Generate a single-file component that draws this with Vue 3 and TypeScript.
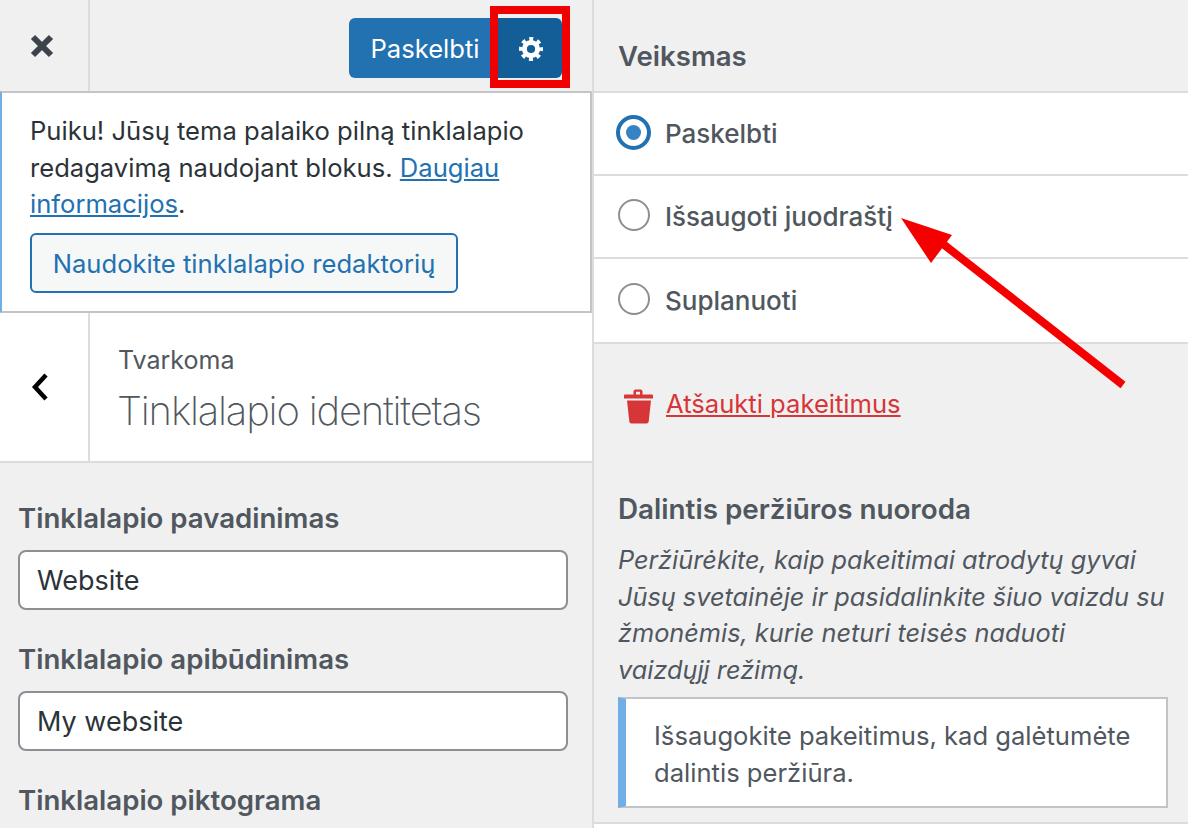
<template>
  <div class="page">
    <section class="left">
      <header class="topbar">
        <div class="close">
          <svg width="26" height="26" viewBox="0 0 26 26"><path d="M4 4 22 22M22 4 4 22" stroke="#3c434a" stroke-width="6" /></svg>
        </div>
        <div class="actions">
          <button class="publish">Paskelbti</button>
          <button class="gear">
            <svg width="26" height="26" viewBox="0 0 26 26">
              <circle cx="13" cy="13" r="10" fill="none" stroke="#fff" stroke-width="4" stroke-dasharray="3.9 3.95" stroke-dashoffset="2" />
              <circle cx="13" cy="13" r="6.6" fill="none" stroke="#fff" stroke-width="5" />
            </svg>
          </button>
        </div>
      </header>

      <div class="theme-notice">
        <p>Puiku! Jūsų tema palaiko pilną tinklalapio redagavimą naudojant blokus. <a>Daugiau informacijos</a>.</p>
        <button class="outline">Naudokite tinklalapio redaktorių</button>
      </div>

      <div class="section-head">
        <div class="back">
          <svg width="20" height="30" viewBox="0 0 20 30"><path d="M16 3 5 15l11 12" fill="none" stroke="#000" stroke-width="4.5" /></svg>
        </div>
        <div class="section-title">
          <span class="crumb">Tvarkoma</span>
          <h2>Tinklalapio identitetas</h2>
        </div>
      </div>

      <div class="fields">
        <div v-for="f in fields" :key="f.label" class="field">
          <label>{{ f.label }}</label>
          <div v-if="f.value" class="input">{{ f.value }}</div>
        </div>
      </div>
    </section>

    <aside class="right">
      <h3 class="action-title">Veiksmas</h3>
      <div class="radios">
        <div v-for="(r, i) in radios" :key="r" class="radio-row">
          <span class="radio" :class="{ on: i === 0 }"></span>
          <span>{{ r }}</span>
        </div>
      </div>

      <div class="discard">
        <svg class="trash" width="32" height="38" viewBox="0 0 32 38">
          <path d="M2 8.500Q2 7.500 3 7.500h8.500V4.500Q11.500 2.500 13.500 2.500h5q2 0 2 2v3H30q1 0 1 1v3H2zM14 4.700v2.800h4V4.700z" fill="#d63638" fill-rule="evenodd" />
          <path d="M5 13.500h24l-2.300 21q-.2 2-2.200 2H9.500q-2 0-2.200-2z" fill="#d63638" />
        </svg>
        <a>Atšaukti pakeitimus</a>
      </div>

      <div class="share">
        <h4>Dalintis peržiūros nuoroda</h4>
        <p class="desc">Peržiūrėkite, kaip pakeitimai atrodytų gyvai Jūsų svetainėje ir pasidalinkite šiuo vaizdu su žmonėmis, kurie neturi teisės naduoti<br />vaizdųjį režimą.</p>
        <div class="save-notice">Išsaugokite pakeitimus, kad galėtumėte dalintis peržiūra.</div>
      </div>
      <div class="bottom-line"></div>
    </aside>

    <!-- annotations on top of the screenshot -->
    <div class="red-box"></div>
    <svg class="arrow" width="1188" height="828" viewBox="0 0 1188 828">
      <path d="M1123 385 938 240" stroke="#f40000" stroke-width="8" />
      <path d="M901 218 952 235 931 263z" fill="#f40000" />
    </svg>
  </div>
</template>

<script setup lang="ts">
const fields = [
  { label: 'Tinklalapio pavadinimas', value: 'Website' },
  { label: 'Tinklalapio apibūdinimas', value: 'My website' },
  { label: 'Tinklalapio piktograma', value: '' },
];

const radios = ['Paskelbti', 'Išsaugoti juodraštį', 'Suplanuoti'];
</script>

<style>
html,
body {
  margin: 0;
  background: #f0f0f1;
}
</style>

<style scoped>
* {
  box-sizing: border-box;
}

.page {
  position: relative;
  display: flex;
  width: 1188px;
  height: 828px;
  overflow: hidden;
  background: #f0f0f1;
  font-family: Inter, "Liberation Sans", sans-serif;
  font-size: 25.6px;
  color: #50575e;
}

.left {
  width: 594px;
  flex-shrink: 0;
  border-right: 2px solid #dcdcde;
}

.topbar {
  display: flex;
  height: 91px;
}

.close {
  display: flex;
  width: 90px;
  align-items: center;
  justify-content: center;
  padding-right: 4px;
  border-right: 2px solid #dcdcde;
}

.actions {
  display: flex;
  flex: 1;
  justify-content: flex-end;
  padding: 18px 30px 0 0;
}

.publish,
.gear {
  height: 60px;
  border: 0;
  color: #fff;
  font: inherit;
}

.publish {
  width: 148px;
  padding: 0 0 0 4px;
  background: #2271b1;
  border-radius: 6px 0 0 6px;
}

.gear {
  display: flex;
  width: 65px;
  padding: 1px 0 0 2px;
  align-items: center;
  justify-content: center;
  background: #135e96;
  border-radius: 0 6px 6px 0;
}

.theme-notice {
  height: 222px;
  padding: 20px 28px 0 28px;
  background: #fff;
  border: 2px solid #c3c4c7;
  border-left-color: #72aee6;
  color: #2c3338;
}

.theme-notice p {
  margin: 0;
  line-height: 36.500px;
}

.theme-notice a {
  color: #2271b1;
  text-decoration: underline;
}

.outline {
  display: block;
  width: 428px;
  height: 60px;
  margin-top: 10px;
  padding: 1px 0 0;
  background: #f6f7f7;
  border: 2px solid #2271b1;
  border-radius: 6px;
  color: #2271b1;
  font: inherit;
}

.section-head {
  display: flex;
  height: 150px;
  background: #fff;
  border-bottom: 2px solid #dcdcde;
}

.back {
  display: flex;
  width: 90px;
  align-items: center;
  justify-content: center;
  padding-right: 8px;
  border-right: 2px solid #dcdcde;
}

.section-title {
  display: flex;
  flex-direction: column;
  padding: 31px 0 0 28px;
}

.crumb {
  font-size: 25px;
  line-height: 32px;
}

.section-title h2 {
  margin: 12px 0 0 -1px;
  font-size: 40px;
  font-weight: 200;
  letter-spacing: -1.2px;
  line-height: 46px;
}

.fields {
  padding: 36px 24px 0 18px;
}

.field {
  margin-bottom: 30px;
}

.field label {
  display: block;
  height: 38px;
  margin-bottom: 13px;
  font-size: 27.600px;
  font-weight: 600;
  line-height: 38px;
}

.input {
  height: 60px;
  padding-left: 17px;
  background: #fff;
  border: 2px solid #8c8f94;
  border-radius: 8px;
  color: #2c3338;
  font-size: 27px;
  line-height: 58px;
}

.right {
  display: flex;
  flex: 1;
  min-width: 0;
  flex-direction: column;
}

.action-title {
  height: 91px;
  margin: 0;
  padding: 37px 0 0 24px;
  font-size: 27.600px;
  font-weight: 600;
  line-height: 38px;
}

.radios {
  background: #fff;
  border-top: 2px solid #dcdcde;
  border-bottom: 2px solid #dcdcde;
}

.radio-row {
  display: flex;
  height: 83px;
  align-items: center;
  gap: 15px;
  padding-left: 24px;
  font-size: 26px;
  font-weight: 500;
  border-bottom: 2px solid #dcdcde;
}

.radio-row:last-child {
  border-bottom: 0;
}

.radio {
  display: flex;
  width: 32px;
  height: 32px;
  margin-bottom: 3px;
  align-items: center;
  justify-content: center;
  border: 2px solid #8c8f94;
  border-radius: 50%;
}

.radio.on {
  width: 35px;
  height: 35px;
  margin: 0 -1px 3px -2px;
  border: 4px solid #2271b1;
}

.radio.on::after {
  content: "";
  width: 15px;
  height: 15px;
  background: #3582c4;
  border-radius: 50%;
}

.discard {
  display: flex;
  height: 118px;
  align-items: center;
  gap: 12px;
  margin-bottom: 28px;
  padding: 0 0 0 28px;
}

.discard a {
  color: #d63638;
  text-decoration: underline;
}

.trash {
  margin-top: 6px;
}

.share {
  padding: 0 20px 0 24px;
}

.share h4 {
  margin: 0;
  font-size: 27.800px;
  font-weight: 600;
  line-height: 38px;
}

.desc {
  margin: 14px 0 0;
  font-size: 25.300px;
  font-style: italic;
  line-height: 36.500px;
}

.save-notice {
  height: 111px;
  margin-top: 9px;
  padding: 19px 20px 0 28px;
  background: #fff;
  border: 2px solid #c3c4c7;
  border-left: 8px solid #72aee6;
  line-height: 36.500px;
}

.bottom-line {
  flex: 1;
  margin-top: 14px;
  background: #fff;
  border-top: 2px solid #dcdcde;
}

.red-box {
  position: absolute;
  top: 6px;
  left: 490px;
  width: 80px;
  height: 82px;
  border: 8px solid #f00000;
}

.arrow {
  position: absolute;
  top: 0;
  left: 0;
  pointer-events: none;
}
</style>
